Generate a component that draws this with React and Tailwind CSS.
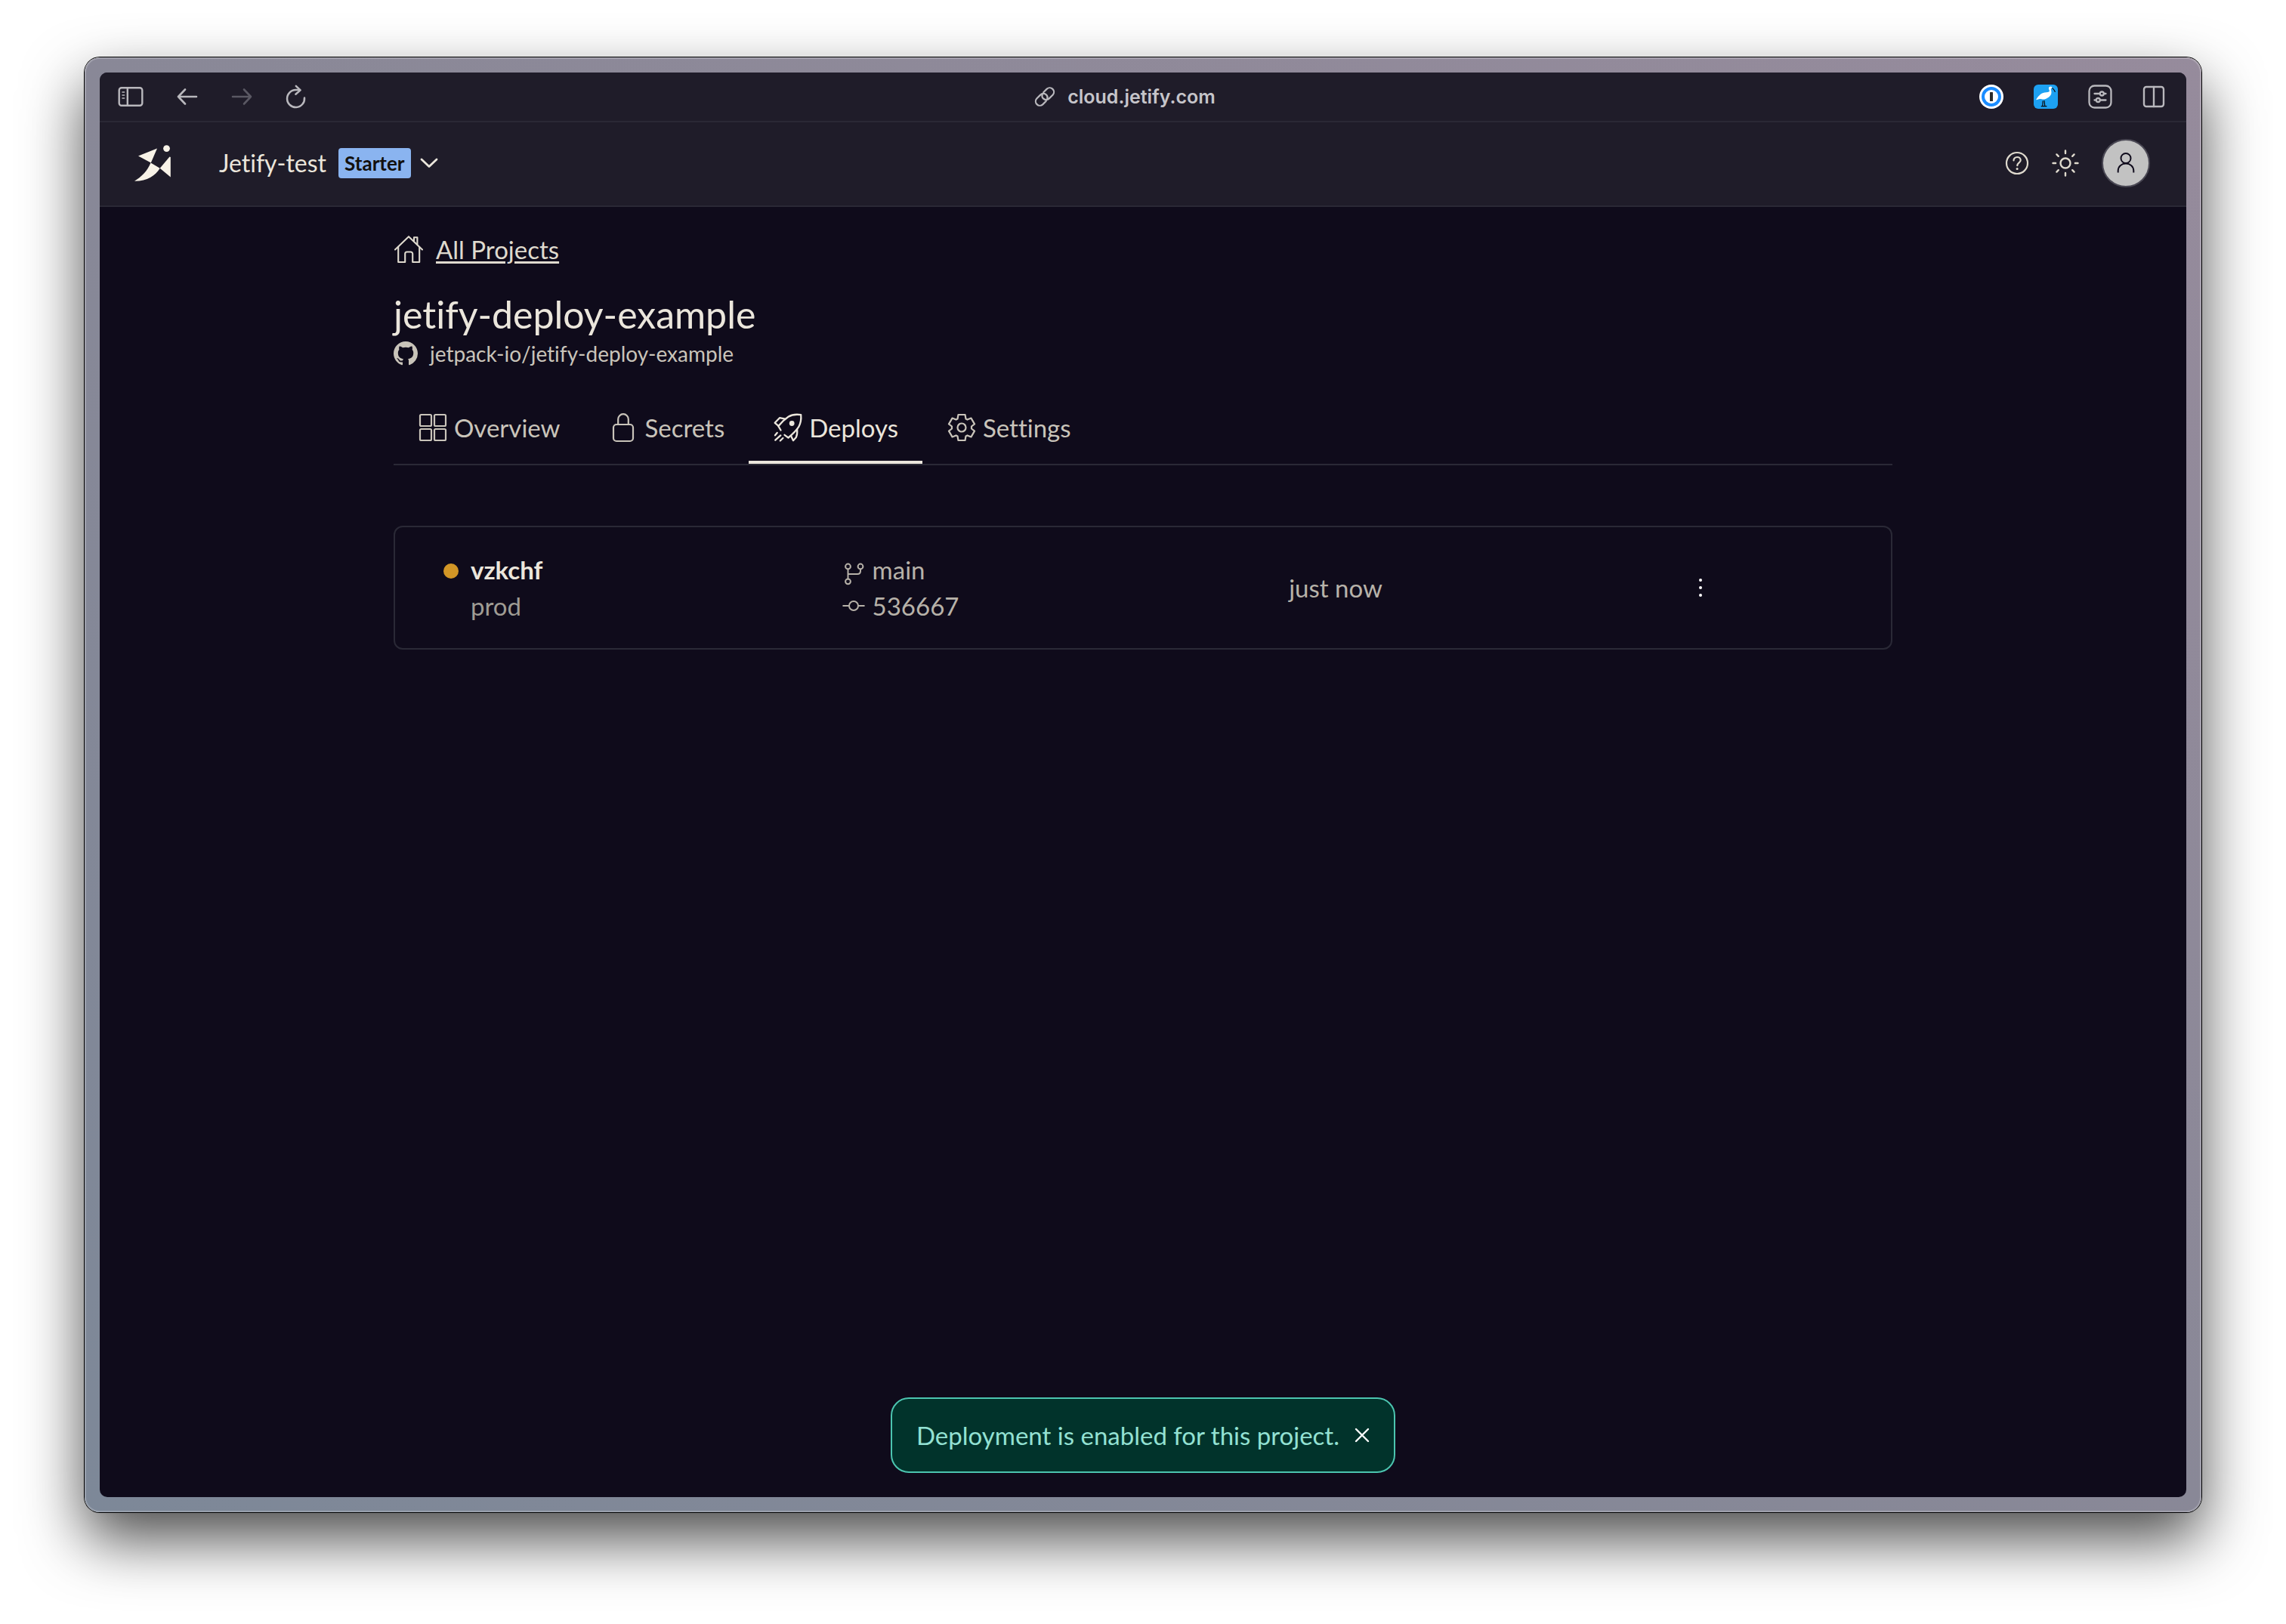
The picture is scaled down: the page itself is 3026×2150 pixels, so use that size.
import React from "react";

const line = {
  fill: "none",
  stroke: "currentColor",
  strokeLinecap: "round",
  strokeLinejoin: "round",
  "aria-hidden": true,
};

function SidebarIcon() {
  return (
    <svg viewBox="0 0 34 28" className="h-7 w-[34px]" strokeWidth="2.4" {...line}>
      <rect x="1.7" y="2.2" width="30.6" height="23.6" rx="3.2" />
      <path d="M12.8 2.2v23.6" />
      <path d="M6 8h2.6M6 12h2.6M6 16h2.6" strokeWidth="1.6" />
    </svg>
  );
}

function BackIcon() {
  return (
    <svg viewBox="0 0 28 24" className="h-6 w-7" strokeWidth="2.6" {...line}>
      <path d="M26 12H2M11 2.5L2 12l9 9.5" />
    </svg>
  );
}

function ForwardIcon() {
  return (
    <svg viewBox="0 0 28 24" className="h-6 w-7" strokeWidth="2.6" {...line}>
      <path d="M2 12h24M17 2.5L26 12l-9 9.5" />
    </svg>
  );
}

function ReloadIcon() {
  return (
    <svg viewBox="0 0 28 32" className="h-8 w-7" strokeWidth="2.5" {...line}>
      <path d="M25 17.5A11.5 11.5 0 1 1 13.5 7h5.5" />
      <path d="M13.8 1.8L19.6 7.4l-6.2 5.4" />
    </svg>
  );
}

function LinkIcon() {
  return (
    <svg viewBox="0 0 28 28" className="size-7" strokeWidth="2.2" {...line}>
      <path d="M12.2 8.2l4.6-4.6a5.6 5.6 0 0 1 7.9 7.9l-4.9 4.9a5.6 5.6 0 0 1-7.9 0 5.4 5.4 0 0 1-1.2-5.4" />
      <path d="M15.8 19.8l-4.6 4.6a5.6 5.6 0 0 1-7.9-7.9l4.9-4.9a5.6 5.6 0 0 1 7.9 0 5.4 5.4 0 0 1 1.2 5.4" />
    </svg>
  );
}

function PasswordIcon() {
  return (
    <svg viewBox="0 0 32 32" className="size-8" aria-hidden="true">
      <circle cx="16" cy="16" r="16" fill="#fff" />
      <circle cx="16" cy="16" r="11" fill="#fff" stroke="#1a8cff" strokeWidth="4" />
      <rect x="14" y="10" width="4" height="12" rx="0.6" fill="#2b2b2b" />
    </svg>
  );
}

function BirdIcon() {
  return (
    <svg viewBox="0 0 32 32" className="size-8" aria-hidden="true">
      <rect width="32" height="32" rx="6" fill="#1da1f2" />
      <path
        d="M3 20.2C5.500 16 9 11.200 14.500 10.400c3.200-.4 5.800-.2 6.400-1.600.5-1.400-1.400-2.400-1-4.400.4-1.900 3-2.600 4.300-1.100l.4 1.300-1.900.8c.4 2.200 1.200 4.600.5 6.800-1 3.200-4.400 5.800-8.200 7-3 .9-4.700-.4-7-.3-1.700.1-3.500 1.300-5 1.300z"
        fill="#fff"
      />
      <path
        d="M24.400 4.400c2 1.200 3.300 3.200 4.100 5.400M12.200 21.500l-.4 7M14 21l.8 7.500M9.800 28.700h7.600"
        fill="none"
        stroke="#0b0b0b"
        strokeWidth="1.2"
      />
    </svg>
  );
}

function SlidersIcon() {
  return (
    <svg viewBox="0 0 32 32" className="size-8" strokeWidth="2.3" {...line}>
      <rect x="1.5" y="1.5" width="29" height="29" rx="7" />
      <path d="M8.500 12H15M21.500 12h2" />
      <circle cx="18.3" cy="12" r="2.5" />
      <path d="M8.500 20.500h2M16.500 20.500h7" />
      <circle cx="13.3" cy="20.5" r="2.5" />
    </svg>
  );
}

function SplitIcon() {
  return (
    <svg viewBox="0 0 30 32" className="h-8 w-[30px]" strokeWidth="2.4" {...line}>
      <rect x="2" y="3" width="26" height="26" rx="3.2" />
      <path d="M15 3v26" />
    </svg>
  );
}

function Logo() {
  return (
    <svg viewBox="0 0 48 48" className="size-12" fill="#f8f3e8" aria-hidden="true">
      <path d="M5 14.500L30 4.500 21.800 23.500z" />
      <circle cx="42.5" cy="4.6" r="4.4" />
      <path d="M21.500 23.500l12.200 7.200C27 41 17 48 0 47.800 9 42 17 35 21.500 23.500z" />
      <path d="M33.700 30.700L46.500 15.500 47.800 16v26.500z" />
    </svg>
  );
}

function ChevronIcon() {
  return (
    <svg viewBox="0 0 24 16" className="h-4 w-6" strokeWidth="2.8" {...line}>
      <path d="M2 3l10 9.500L22 3" />
    </svg>
  );
}

function HelpIcon() {
  return (
    <svg viewBox="0 0 32 32" className="size-8" strokeWidth="2.2" {...line}>
      <circle cx="16" cy="16" r="14" />
      <path d="M11.500 12.400c0-2.600 2-4.400 4.600-4.400s4.600 1.700 4.600 4c0 3.300-4.400 3.400-4.400 7.200" />
      <circle cx="16.1" cy="23.6" r="1.5" fill="currentColor" stroke="none" />
    </svg>
  );
}

function SunIcon() {
  return (
    <svg viewBox="0 0 40 40" className="size-10" strokeWidth="2.4" {...line}>
      <circle cx="20" cy="20" r="6.5" />
      <path d="M20 3.500v3.600M20 32.900v3.600M3.500 20h3.600M32.900 20h3.600M8.400 8.400l2.400 2.400M29.200 29.200l2.400 2.400M8.400 31.600l2.400-2.400M29.200 10.800l2.400-2.400" />
    </svg>
  );
}

function UserIcon() {
  return (
    <svg viewBox="0 0 32 32" className="size-8" strokeWidth="2" {...line} strokeLinecap="butt">
      <circle cx="16" cy="9.5" r="6.5" />
      <path d="M5.700 28.500V26c0-5.500 4.500-9.500 10.300-9.500S26.300 20.500 26.300 26v2.500" />
    </svg>
  );
}

function HomeIcon() {
  return (
    <svg viewBox="0 0 40 40" className="size-10" strokeWidth="2.1" {...line}>
      <path d="M2 20.500L20 3.200l18 17.300" />
      <path d="M6.200 17v20h9V26a2.500 2.500 0 0 1 2.500-2.500h5a2.500 2.500 0 0 1 2.500 2.500v11h9V17" />
      <path d="M27 9V4.300h4.400v9" />
    </svg>
  );
}

function GitHubIcon() {
  return (
    <svg viewBox="0 0 16 16" className="size-8" fill="currentColor" aria-hidden="true">
      <path d="M8 0C3.580 0 0 3.580 0 8c0 3.540 2.290 6.530 5.470 7.590.4.070.55-.17.55-.38 0-.19-.01-.82-.01-1.490-2.010.37-2.530-.49-2.690-.94-.09-.23-.48-.94-.82-1.130-.28-.15-.68-.52-.01-.53.63-.01 1.080.58 1.230.82.72 1.210 1.870.87 2.330.66.07-.52.28-.87.51-1.070-1.780-.2-3.640-.89-3.640-3.950 0-.87.31-1.590.82-2.150-.08-.2-.36-1.020.08-2.120 0 0 .67-.21 2.200.82.64-.18 1.320-.27 2-.27s1.360.09 2 .27c1.530-1.040 2.200-.82 2.200-.82.44 1.100.16 1.920.08 2.120.51.56.82 1.270.82 2.150 0 3.070-1.870 3.750-3.650 3.950.29.25.54.73.54 1.480 0 1.070-.01 1.930-.01 2.200 0 .21.15.46.55.38A8.010 8.010 0 0 0 16 8c0-4.420-3.580-8-8-8z" />
    </svg>
  );
}

function GridIcon() {
  return (
    <svg viewBox="0 0 40 40" className="size-10" strokeWidth="2.2" {...line}>
      <rect x="3" y="3" width="15" height="15" rx="1.5" />
      <rect x="22" y="3" width="15" height="15" rx="1.5" />
      <rect x="3" y="22" width="15" height="15" rx="1.5" />
      <rect x="22" y="22" width="15" height="15" rx="1.5" />
    </svg>
  );
}

function LockIcon() {
  return (
    <svg viewBox="0 0 40 40" className="size-10" strokeWidth="2.2" {...line}>
      <rect x="7" y="16" width="26" height="22" rx="4" />
      <path d="M13.200 16V9a6.800 6.800 0 0 1 13.600 0v7" />
    </svg>
  );
}

function RocketIcon() {
  return (
    <svg viewBox="0 0 40 40" className="size-10" strokeWidth="2.3" {...line}>
      <path d="M10.500 23.500L7.300 18.200C11 13.500 15 9.500 20.500 5.800 25 3 31 2.200 37.200 3.200c.6 5.800-.2 11-3 16C31 24 26 29 20.500 33.500l-5-3.700" />
      <path d="M16.300 8.600L9 7.200l-6.300 6.600 4.800 4" />
      <path d="M32.200 22.500c.3 4.500 0 7.500-1.400 10.500L27 37.200l-3-6.200" />
      <circle cx="25.2" cy="14.5" r="3.4" fill="currentColor" stroke="none" />
      <path d="M3 30.300l2.700-3.300M3.300 36.700l7-6.300M9.800 37.500l3.600-3.500" />
    </svg>
  );
}

function GearIcon() {
  return (
    <svg viewBox="-20 -20 40 40" className="size-10" strokeWidth="2.2" {...line}>
      <circle r="5.5" />
      <path d="M-4.500 -17H4.500L5.500 -11.500 7.500 -10.400 12.500 -12.400 17 -4.600 13 -1.500V1.500L17 4.600 12.500 12.400 7.500 10.400 5.500 11.500 4.500 17H-4.500L-5.500 11.500 -7.500 10.400 -12.500 12.400 -17 4.600 -13 1.500V-1.500L-17 -4.600 -12.500 -12.400 -7.500 -10.400 -5.500 -11.500z" />
    </svg>
  );
}

function BranchIcon() {
  return (
    <svg viewBox="0 -12 30 44" className="h-11 w-[30px]" strokeWidth="2" {...line}>
      <circle cx="7.5" cy="6" r="3.4" />
      <circle cx="24" cy="6" r="3.4" />
      <circle cx="7.5" cy="25.8" r="3.4" />
      <path d="M7.500 9.400v13M24 9.400v2.600c0 2.500-1.500 4-4 4H7.500" />
    </svg>
  );
}

function CommitIcon() {
  return (
    <svg viewBox="0 0 30 32" className="h-8 w-[30px]" strokeWidth="2" {...line}>
      <circle cx="15" cy="16" r="6" />
      <path d="M1.200 16H9M21 16h7.800" />
    </svg>
  );
}

const tabs = [
  { name: "Overview", Icon: GridIcon },
  { name: "Secrets", Icon: LockIcon },
  { name: "Deploys", Icon: RocketIcon, current: true },
  { name: "Settings", Icon: GearIcon },
];

function BrowserBar() {
  return (
    <div className="grid h-[66px] grid-cols-[1fr_auto_1fr] items-center border-b-2 border-[#2a2835] bg-[#1f1c29] pr-7 pl-6 text-[#b9b8bd]">
      <div className="flex items-center gap-11">
        <button aria-label="Show sidebar"><SidebarIcon /></button>
        <button aria-label="Back"><BackIcon /></button>
        <button aria-label="Forward" className="text-[#5a5863]"><ForwardIcon /></button>
        <button aria-label="Reload"><ReloadIcon /></button>
      </div>
      <div className="flex items-center gap-4 pr-11">
        <LinkIcon />
        <span className="font-['Inter',sans-serif] text-[25px] leading-8 font-semibold text-[#c6c5ca]">
          cloud.jetify.com
        </span>
      </div>
      <div className="flex items-center justify-end gap-10">
        <button aria-label="Password manager"><PasswordIcon /></button>
        <button aria-label="Bird extension"><BirdIcon /></button>
        <button aria-label="Page settings"><SlidersIcon /></button>
        <button aria-label="Split view"><SplitIcon /></button>
      </div>
    </div>
  );
}

function Header() {
  return (
    <header className="flex h-28 items-center border-b-2 border-[#2a2835] bg-[#1f1c29] pr-12 pb-0.5 pl-[46px] text-[#ebe6dc]">
      <a href="#home" aria-label="Home"><Logo /></a>
      <button className="ml-16 flex items-center gap-3">
        <span className="mr-1 text-[32px] leading-10">Jetify-test</span>
        <span className="rounded bg-[#8ab4f0] px-2 text-[26px] leading-10 font-bold text-[#12100d]">
          Starter
        </span>
        <ChevronIcon />
      </button>
      <div className="ml-auto flex items-center">
        <button aria-label="Help" className="text-[#dfdace]"><HelpIcon /></button>
        <button aria-label="Toggle theme" className="ml-7 text-[#dfdace]"><SunIcon /></button>
        <button
          aria-label="Account"
          className="ml-7 flex size-16 items-center justify-center rounded-full border-2 border-[#4a4854] bg-[#c2c2c2] text-[#0f0b1c]"
        >
          <UserIcon />
        </button>
      </div>
    </header>
  );
}

function Deployments() {
  return (
    <div className="mt-20 rounded-xl border-2 border-[#2a2936] py-8 pr-2">
      <table className="w-full table-fixed text-left text-[33px] leading-[48px] text-[#b7b2a9]">
        <tbody>
          <tr>
            <td className="w-[30%] p-0 pl-16">
              <div className="flex items-center gap-4">
                <span className="mt-1 size-5 rounded-full bg-[#d29626]" />
                <span className="font-bold text-[#ebe6dc]">vzkchf</span>
              </div>
              <div className="pl-9 text-[#9f9c94]">prod</div>
            </td>
            <td className="w-[30%] p-0">
              <div className="flex items-center gap-[10px]">
                <BranchIcon />
                main
              </div>
              <div className="flex items-center gap-[10px]">
                <CommitIcon />
                536667
              </div>
            </td>
            <td className="w-[27%] p-0">just now</td>
            <td className="p-0 align-middle">
              <button aria-label="Deployment actions" className="flex h-10 w-6 items-center justify-center">
                <svg viewBox="0 0 4 24" className="h-6 w-1" fill="#fff" aria-hidden="true">
                  <circle cx="2" cy="2" r="2" />
                  <circle cx="2" cy="12" r="2" />
                  <circle cx="2" cy="22" r="2" />
                </svg>
              </button>
            </td>
          </tr>
        </tbody>
      </table>
    </div>
  );
}

function Toast() {
  return (
    <div className="absolute inset-x-0 bottom-8 flex justify-center">
      <div
        role="status"
        className="flex items-center gap-5 rounded-3xl border-2 border-[#4cc5b0] bg-[#01332b] px-8 py-6 text-[33px] leading-[48px] text-[#93e1d3]"
      >
        Deployment is enabled for this project.
        <button aria-label="Dismiss" className="text-white">
          <svg viewBox="0 0 20 20" className="size-5" strokeWidth="2.4" {...line}>
            <path d="M2 2l16 16M18 2L2 18" />
          </svg>
        </button>
      </div>
    </div>
  );
}

export default function App() {
  return (
    <div className="flex min-h-screen flex-col bg-white px-28 pt-[76px] pb-[148px] font-['Lato',sans-serif] [font-variant-ligatures:none]">
      <div className="flex grow flex-col rounded-[20px] bg-linear-to-bl from-[#968b9c] via-[#898897] to-[#7d8898] p-5 shadow-[0_0_0_1px_#000,inset_0_0_0_2px_rgba(255,255,255,0.2),0_36px_80px_rgba(0,0,0,0.7)]">
        <div className="relative flex grow flex-col overflow-hidden rounded-[10px] bg-[#0f0b1b]">
          <BrowserBar />
          <Header />
          <main className="mx-auto w-full max-w-[1984px] grow pt-9">
            <a href="#projects" className="flex w-fit items-center gap-4 text-[#dfdace]">
              <HomeIcon />
              <span className="text-[33px] leading-10 underline decoration-[3px] underline-offset-[3px]">
                All Projects
              </span>
            </a>
            <h1 className="mt-9 text-[50px] leading-[60px] text-[#ebe6dc]">jetify-deploy-example</h1>
            <a href="#repository" className="mt-0.5 flex w-fit items-center gap-4 text-[28px] leading-10 text-[#c9c4ba]">
              <GitHubIcon />
              jetpack-io/jetify-deploy-example
            </a>
            <nav className="mt-[58px] flex border-b-2 border-[#2a2936]" aria-label="Project">
              {tabs.map(({ name, Icon, current }) => (
                <a
                  key={name}
                  href={"#" + name.toLowerCase()}
                  aria-current={current ? "page" : undefined}
                  className={
                    current
                      ? "flex items-center gap-2 border-b-4 border-[#ebe6dc] px-8 pb-6 text-[33px] leading-10 text-[#ebe6dc]"
                      : "flex items-center gap-2 border-b-4 border-transparent px-8 pb-6 text-[33px] leading-10 text-[#c9c4ba]"
                  }
                >
                  <Icon />
                  {name}
                </a>
              ))}
            </nav>
            <Deployments />
          </main>
          <Toast />
        </div>
      </div>
    </div>
  );
}
